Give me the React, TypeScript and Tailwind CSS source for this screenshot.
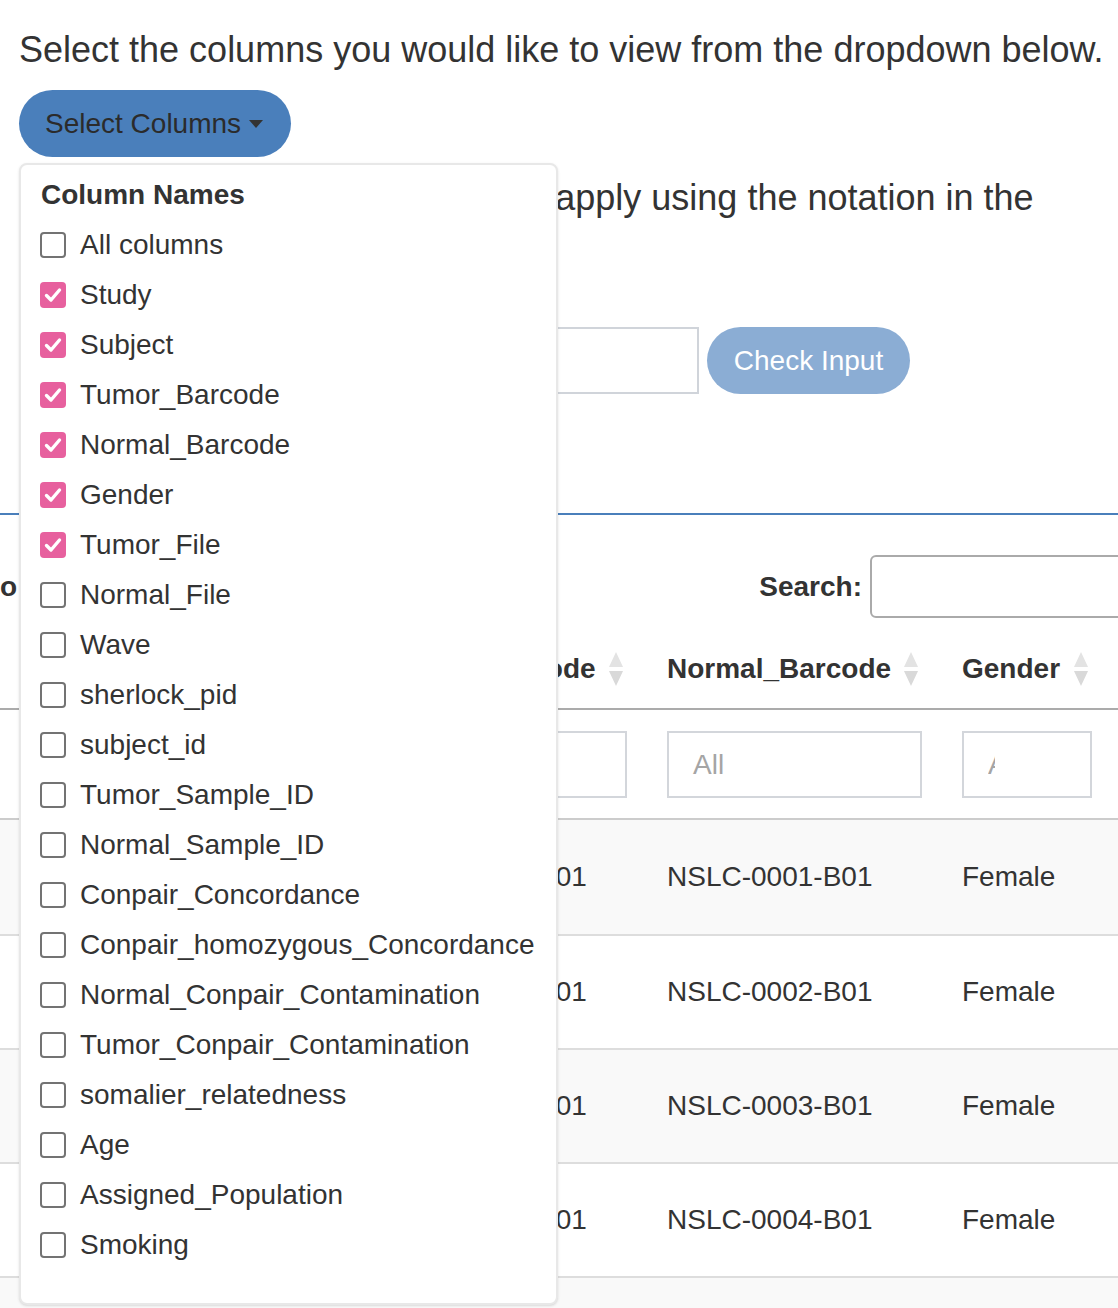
const columnNames: [string, boolean][] = [
  ['All columns', false],
  ['Study', true],
  ['Subject', true],
  ['Tumor_Barcode', true],
  ['Normal_Barcode', true],
  ['Gender', true],
  ['Tumor_File', true],
  ['Normal_File', false],
  ['Wave', false],
  ['sherlock_pid', false],
  ['subject_id', false],
  ['Tumor_Sample_ID', false],
  ['Normal_Sample_ID', false],
  ['Conpair_Concordance', false],
  ['Conpair_homozygous_Concordance', false],
  ['Normal_Conpair_Contamination', false],
  ['Tumor_Conpair_Contamination', false],
  ['somalier_relatedness', false],
  ['Age', false],
  ['Assigned_Population', false],
  ['Smoking', false],
]

const rows = [
  { subject: 'NSLC-0001', tumor: 'NSLC-0001-T01', normal: 'NSLC-0001-B01', gender: 'Female' },
  { subject: 'NSLC-0002', tumor: 'NSLC-0002-T01', normal: 'NSLC-0002-B01', gender: 'Female' },
  { subject: 'NSLC-0003', tumor: 'NSLC-0003-T01', normal: 'NSLC-0003-B01', gender: 'Female' },
  { subject: 'NSLC-0004', tumor: 'NSLC-0004-T01', normal: 'NSLC-0004-B01', gender: 'Female' },
  { subject: 'NSLC-0005', tumor: 'NSLC-0005-T01', normal: 'NSLC-0005-B01', gender: 'Male' },
]

const gridCols = 'grid grid-cols-[363px_284px_295px_170px_300px]'

function SortArrows() {
  return (
    <svg width="14" height="34" viewBox="0 0 14 34" className="shrink-0">
      <polygon points="7,0 14,15 0,15" fill="#e3e3e3" />
      <polygon points="0,19 14,19 7,34" fill="#d9d9d9" />
    </svg>
  )
}

function Checkbox({ checked }: { checked: boolean }) {
  if (checked) {
    return (
      <span className="w-[26px] h-[26px] rounded-[4px] bg-[#e7609e] flex items-center justify-center shrink-0">
        <svg width="20" height="20" viewBox="0 0 20 20">
          <polyline points="3.5,10.5 8,15 16.5,5" fill="none" stroke="white" strokeWidth="3.4" strokeLinecap="round" strokeLinejoin="round" />
        </svg>
      </span>
    )
  }
  return <span className="w-[26px] h-[26px] rounded-[4px] border-2 border-[#737373] bg-white shrink-0" />
}

function HeaderCell({ label }: { label: string }) {
  return (
    <div className="flex items-center justify-between pl-[20px] pr-[24px] font-bold whitespace-nowrap overflow-hidden">
      <span>{label}</span>
      <SortArrows />
    </div>
  )
}

function FilterInput({ narrow }: { narrow?: boolean }) {
  return (
    <div className="px-[20px] pt-[21px] pb-[20px]">
      <div className="h-[67px] border-2 border-[#d3d6db] bg-white flex items-center pl-[24px] text-[#a5a5a5]">
        {narrow ? <span className="w-[7px] overflow-hidden whitespace-nowrap">All</span> : <span>All</span>}
      </div>
    </div>
  )
}

export default function App() {
  return (
    <div
      className="relative w-[1118px] h-[1308px] overflow-hidden bg-white text-[#333333]"
      style={{ fontFamily: '"Liberation Sans", Arial, sans-serif' }}
    >
      <div className="pl-[19px] pt-[24px]">
        <p className="text-[36px] leading-[52px] whitespace-nowrap">
          Select the columns you would like to view from the dropdown below.
        </p>

        <button className="mt-[14px] w-[272px] h-[67px] rounded-full bg-[#4a7fbb] flex items-center pl-[26px] text-[28px] text-[#2b2b2b]">
          Select Columns
          <span className="ml-[8px] w-0 h-0 border-l-[7px] border-r-[7px] border-t-[8px] border-l-transparent border-r-transparent border-t-[#333333]" />
        </button>

        <p className="mt-[15px] text-[36px] leading-[52px] whitespace-nowrap">
          Enter any filters you would like to apply using the notation in the
          <br />
          example below.
        </p>

        <div className="mt-[51px] flex items-center gap-[8px]">
          <div className="w-[680px] h-[67px] border-2 border-[#d0d4da] bg-white" />
          <button className="w-[203px] h-[67px] rounded-full bg-[#8badd4] text-white text-[28px]">
            Check Input
          </button>
        </div>
      </div>

      <div className="mt-[119px] h-[2px] bg-[#4a7fbb]" />

      <div className="text-[28px]">
        <div className="mt-[40px] flex items-center h-[63px]">
          <div className="w-[862px] shrink-0 flex items-center justify-between font-bold">
            <span>o</span>
            <span>Search:</span>
          </div>
          <div className="ml-[8px] w-[300px] h-[63px] shrink-0 border-2 border-[#aaaaaa] rounded-[6px]" />
        </div>

        <div className={`${gridCols} mt-[12px] h-[80px] border-b-2 border-[#ababab]`}>
          <HeaderCell label="Subject" />
          <HeaderCell label="Tumor_Barcode" />
          <HeaderCell label="Normal_Barcode" />
          <HeaderCell label="Gender" />
          <HeaderCell label="Tumor_File" />
        </div>

        <div className={`${gridCols} border-b-2 border-[#cccccc]`}>
          <FilterInput />
          <FilterInput />
          <FilterInput />
          <FilterInput narrow />
          <FilterInput />
        </div>

        {rows.map((r, i) => (
          <div
            key={r.subject}
            className={`${gridCols} h-[114px] items-center ${i > 0 ? 'border-t-2 border-[#dddddd]' : ''} ${i % 2 === 0 ? 'bg-[#f9f9f9]' : 'bg-white'}`}
          >
            <div className="px-[20px] whitespace-nowrap">{r.subject}</div>
            <div className="px-[20px] whitespace-nowrap">{r.tumor}</div>
            <div className="px-[20px] whitespace-nowrap">{r.normal}</div>
            <div className="px-[20px] whitespace-nowrap">{r.gender}</div>
            <div className="px-[20px] whitespace-nowrap">{r.tumor}.bam</div>
          </div>
        ))}
      </div>

      <div className="absolute left-[19px] top-[163px] w-[539px] h-[1142px] bg-white border-2 border-[#e8e8e8] rounded-[8px] shadow-sm pt-[5px] text-[28px]">
        <div className="h-[50px] flex items-center pl-[20px] font-bold">Column Names</div>
        {columnNames.map(([name, checked]) => (
          <label key={name} className="h-[50px] flex items-center pl-[19px] gap-[14px] whitespace-nowrap">
            <Checkbox checked={checked} />
            <span>{name}</span>
          </label>
        ))}
      </div>
    </div>
  )
}
